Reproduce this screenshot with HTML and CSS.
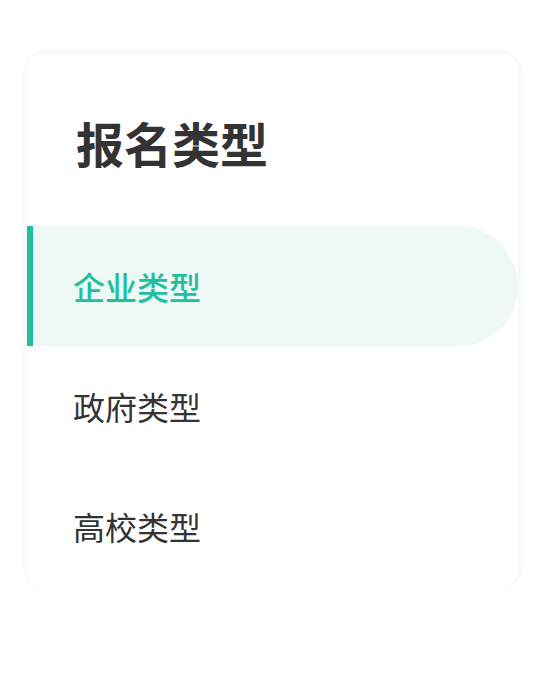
FILE: index.html
```html
<!DOCTYPE html>
<html lang="zh-CN">
<head>
    <meta charset="UTF-8">
    <meta name="viewport" content="width=device-width, initial-scale=1.0">
    <title>报名类型</title>
    <link rel="stylesheet" href="styles.css">
</head>
<body>
    <div class="card">
        <h1 class="card-title">报名类型</h1>
        <ul class="type-list">
            <li class="type-item active">企业类型</li>
            <li class="type-item">政府类型</li>
            <li class="type-item">高校类型</li>
        </ul>
    </div>
</body>
</html>
```

FILE: styles.css
```css
body { margin: 0; padding: 54px 0 0 27px; background: #fff; font-family: "Noto Sans CJK SC", "Noto Sans", sans-serif; color: #333; }
.card { width: 491px; background: #fff; border-radius: 16px; box-shadow: 0 0 10px rgba(0, 0, 0, 0.07); overflow: hidden; }
.card-title { margin: 0; height: 172px; padding-left: 49px; display: flex; align-items: center; padding-top: 4px; box-sizing: border-box; font-size: 48px; font-weight: bold; color: #333; }
.type-list { list-style: none; margin: 0; padding: 0; }
.type-item { height: 120px; display: flex; align-items: center; padding-left: 46px; font-size: 32px; color: #333; }
.type-item.active { padding-left: 40px; border-left: 6px solid #22bf9f; background: #eef8f5; color: #22bf9f; font-weight: 500; border-radius: 0 60px 60px 0; }
```
